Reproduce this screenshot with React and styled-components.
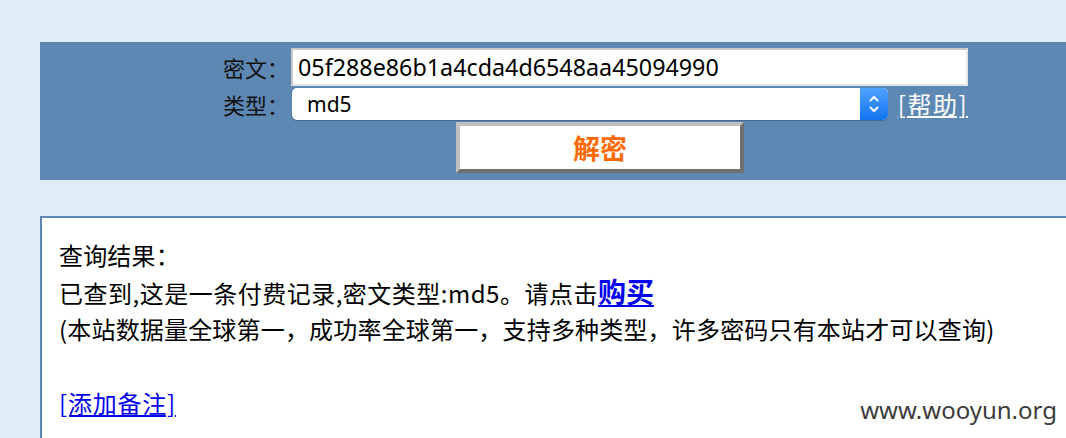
import React from "react";
import styled, { createGlobalStyle } from "styled-components";

const GlobalStyle = createGlobalStyle`
  html, body {
    margin: 0;
    padding: 0;
    background: #e1edf6;
    overflow: hidden;
  }
  body {
    font-family: "Noto Sans CJK SC", "Noto Sans", sans-serif;
    color: #000;
  }
`;

const Page = styled.div`
  width: 1066px;
  height: 438px;
  padding: 42px 0 0 40px;
  box-sizing: border-box;
  position: relative;
  overflow: hidden;
`;

const Panel = styled.div`
  width: 1110px;
  height: 138px;
  background: #5d88b3;
  box-sizing: border-box;
  padding: 6px 0 0 183px;
`;

const FormGrid = styled.div`
  display: grid;
  grid-template-columns: 66px 677px;
  column-gap: 2px;
  row-gap: 2px;
  align-items: center;
`;

const Label = styled.label`
  font-size: 22px;
  line-height: 26px;
  color: #111;
  white-space: nowrap;
`;

const TextInput = styled.input`
  width: 677px;
  height: 38px;
  box-sizing: border-box;
  border: 2px solid #c8c8c8;
  border-right-color: #e4e4e4;
  border-bottom-color: #e4e4e4;
  background: #fff;
  padding: 0 8px 0 5px;
  font-family: "Noto Sans", "Liberation Sans", sans-serif;
  font-size: 23.3px;
  color: #000;
  outline: none;
`;

const SelectRow = styled.div`
  display: flex;
  align-items: center;
  gap: 10px;
`;

const Select = styled.div`
  width: 597px;
  height: 32px;
  box-sizing: border-box;
  display: flex;
  align-items: center;
  background: #fff;
  border-radius: 5px;
  box-shadow: 0 1px 1px rgba(0, 0, 0, 0.25);
  overflow: hidden;
  margin-left: 1px;
`;

const SelectValue = styled.span`
  flex: 1;
  padding-left: 15px;
  font-family: "Noto Sans", "Liberation Sans", sans-serif;
  font-size: 21px;
  line-height: 32px;
`;

const Stepper = styled.span`
  width: 28px;
  height: 32px;
  background: linear-gradient(#4fa3ff, #1273f0);
  display: flex;
  align-items: center;
  justify-content: center;
`;

const HelpLink = styled.a`
  color: #fff;
  font-size: 24px;
  line-height: 28px;
  letter-spacing: 1.5px;
  text-decoration: underline;
  white-space: nowrap;
`;

const ButtonRow = styled.div`
  grid-column: 1 / 3;
  display: flex;
  padding-left: 233px;
`;

const DecryptButton = styled.button`
  width: 288px;
  height: 51px;
  box-sizing: border-box;
  background: #fff;
  border: 4px solid;
  border-color: #c0c0c0 #707070 #707070 #c0c0c0;
  color: #ff6a00;
  font-family: "Noto Sans CJK SC", sans-serif;
  font-size: 27px;
  font-weight: 700;
  padding: 0;
  cursor: pointer;
`;

const ResultBox = styled.div`
  margin-top: 36px;
  width: 1110px;
  height: 240px;
  box-sizing: border-box;
  background: #fff;
  border: 2px solid #5d88b3;
  padding: 18px 0 0 17px;
  font-size: 24px;
  line-height: 37px;
  letter-spacing: 0.18px;
`;

const Line = styled.div`
  white-space: nowrap;
  height: 37px;
`;

const Spaced = styled.span`
  letter-spacing: ${(p) => p.$spacing}px;
`;

const BuyLink = styled.a`
  color: #0000ee;
  font-weight: 700;
  font-size: 28px;
  letter-spacing: 0;
  text-decoration: underline;
`;

const NoteLink = styled.a`
  color: #0000ee;
  letter-spacing: 0.8px;
  text-decoration: underline;
`;

const Watermark = styled.div`
  position: absolute;
  right: 9px;
  bottom: 12px;
  font-family: "Noto Sans", "Open Sans", sans-serif;
  font-size: 24px;
  color: #3c3c3c;
`;

function StepperIcon() {
  return (
    <svg width="14" height="22" viewBox="0 0 14 22">
      <path d="M3 8 L7 4 L11 8" fill="none" stroke="#fff" strokeWidth="2" />
      <path d="M3 14 L7 18 L11 14" fill="none" stroke="#fff" strokeWidth="2" />
    </svg>
  );
}

export default function App() {
  return (
    <>
      <GlobalStyle />
      <Page>
        <Panel>
          <FormGrid>
            <Label>密文：</Label>
            <TextInput defaultValue="05f288e86b1a4cda4d6548aa45094990" />
            <Label>类型：</Label>
            <SelectRow>
              <Select>
                <SelectValue>md5</SelectValue>
                <Stepper>
                  <StepperIcon />
                </Stepper>
              </Select>
              <HelpLink href="#">[帮助]</HelpLink>
            </SelectRow>
            <ButtonRow>
              <DecryptButton>解密</DecryptButton>
            </ButtonRow>
          </FormGrid>
        </Panel>
        <ResultBox>
          <Line>查询结果：</Line>
          <Line>
            <Spaced $spacing={0.5}>已查到,这是一条付费记录,密文类型:md5。请点击</Spaced>
            <BuyLink href="#">购买</BuyLink>
          </Line>
          <Line>
            (本站数据量全球第一，成功率全球第一，支持多种类型，许多密码只有本站才可以查询)
          </Line>
          <Line />
          <Line>
            <NoteLink href="#">[添加备注]</NoteLink>
          </Line>
        </ResultBox>
        <Watermark>www.wooyun.org</Watermark>
      </Page>
    </>
  );
}
